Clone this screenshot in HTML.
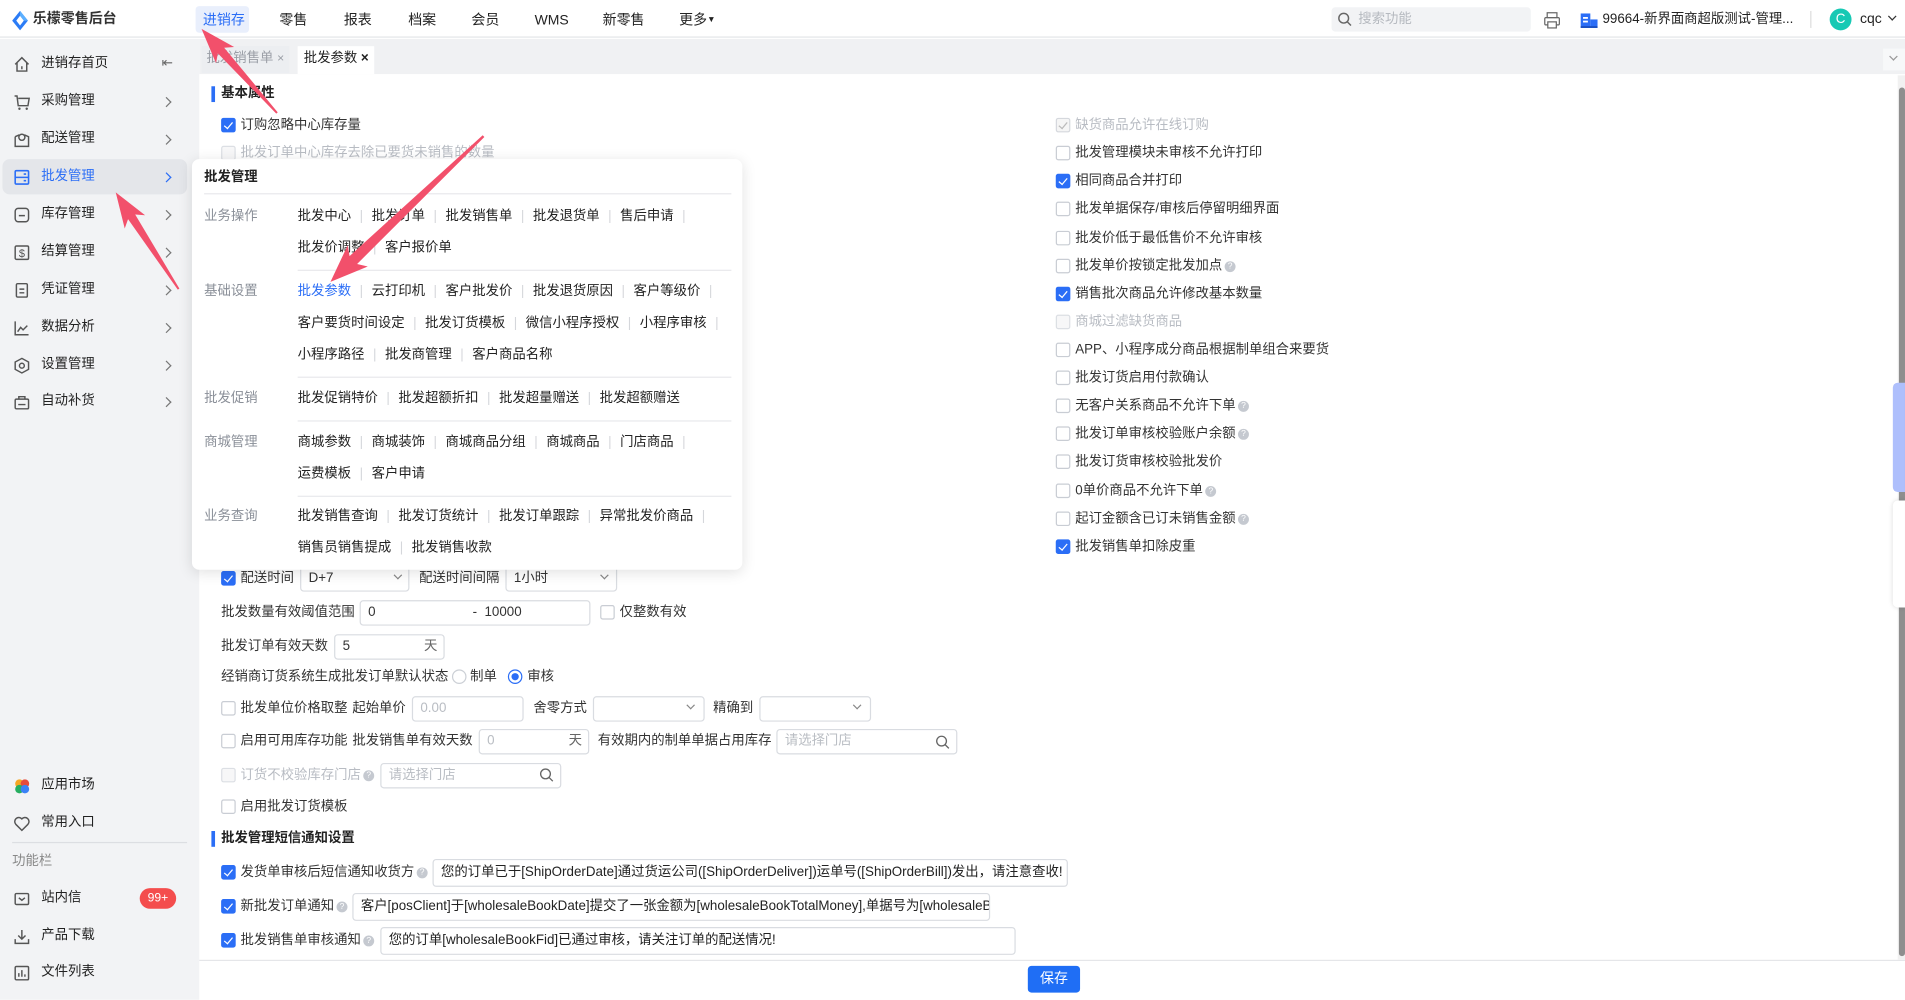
<!DOCTYPE html>
<html><head><meta charset="utf-8"><style>
*{margin:0;padding:0;box-sizing:border-box}
html,body{width:1905px;height:1000px;overflow:hidden;background:#fff}
body{font-family:"Liberation Sans","Noto Sans CJK SC",sans-serif;color:#333}
#w{position:absolute;left:0;top:0;width:1568px;height:823px;transform:scale(1.21492);transform-origin:0 0;font-size:11px;overflow:hidden;background:#fff}
.a{position:absolute;white-space:nowrap;line-height:19px}
.cb{position:absolute;width:12px;height:12px;border:1px solid #c9cdd4;border-radius:2px;background:#fff}
.cb.on{background:#2b6ef6;border-color:#2b6ef6}
.cb.on:after{content:"";position:absolute;left:3px;top:1px;width:3px;height:6px;border:solid #fff;border-width:0 1.3px 1.3px 0;transform:rotate(40deg)}
.cb.dis{background:#f7f7f8;border-color:#dcdfe4}
.cb.dis.on{background:#f5f5f5;border-color:#d5d8dd}
.cb.dis.on:after{border-color:#bbb}
.gray{color:#b8bcc3}
.q{display:inline-block;width:9px;height:9px;border-radius:50%;background:#c5c9d0;color:#fff;font-size:7px;line-height:9px;text-align:center;vertical-align:1px;margin-left:2px}
.in{position:absolute;height:21px;border:1px solid #d9dce1;border-radius:3px;background:#fff;line-height:19px;padding-left:6px;white-space:nowrap;overflow:hidden}
.nav{position:absolute;top:8px;font-size:11.5px;line-height:18px;color:#222}
.sb{position:absolute;left:34px;font-size:11px;color:#222;line-height:19px}
.ic{position:absolute;left:11px;width:14px;height:14px}
.chev{position:absolute;left:134px;width:6px;height:6px;border:solid #777;border-width:1.2px 1.2px 0 0;transform:rotate(45deg)}
.mi{position:absolute;line-height:19px;white-space:nowrap;color:#222}
.sep{color:#d5d7db;margin:0 7px}
.ml{position:absolute;left:168px;color:#8a8f98;line-height:19px}
.hl{position:absolute;height:1px;background:#e8e9ec}
</style></head><body><div id="w">

<!-- top bar -->
<div class="a" style="left:0;top:0;width:1568px;height:31px;background:#fff;border-bottom:1px solid #e3e5e8"></div>
<svg class="a" style="left:10px;top:9px" width="13" height="16" viewBox="0 0 13 16"><path d="M6.5 0L13 8L6.5 16L0 8Z" fill="#2b7cf6"/><path d="M6.5 4L9.6 8L6.5 12L3.4 8Z" fill="#fff"/><path d="M6.5 0L13 8L9.6 8L6.5 4Z" fill="#5cb0ff"/></svg>
<div class="a" style="left:27px;top:7px;font-size:11.5px;font-weight:bold;color:#333">乐檬零售后台</div>
<div class="a" style="left:161px;top:5px;width:44px;height:22px;background:#e9effc;border-radius:3px"></div>
<div class="nav" style="left:167px;color:#2b6ef6">进销存</div>
<div class="nav" style="left:230px">零售</div>
<div class="nav" style="left:283px">报表</div>
<div class="nav" style="left:336px">档案</div>
<div class="nav" style="left:388px">会员</div>
<div class="nav" style="left:440px">WMS</div>
<div class="nav" style="left:496px">新零售</div>
<div class="nav" style="left:559px">更多<span style="font-size:7px;vertical-align:2px">▼</span></div>
<div class="a" style="left:1096px;top:6px;width:164px;height:20px;background:#f2f3f5;border-radius:3px"></div>
<svg class="a" style="left:1101px;top:10px" width="12" height="12"><circle cx="5" cy="5" r="4" fill="none" stroke="#666" stroke-width="1.2"/><path d="M8 8L11 11" stroke="#666" stroke-width="1.2"/></svg>
<div class="a" style="left:1118px;top:7px;color:#b5b9bf">搜索功能</div>
<svg class="a" style="left:1270px;top:9px" width="15" height="15"><rect x="3.5" y="1.5" width="8" height="4" fill="none" stroke="#666"/><rect x="1.5" y="5.5" width="12" height="6" rx="1" fill="none" stroke="#666"/><rect x="4" y="9" width="7" height="5" fill="#fff" stroke="#666"/></svg>
<svg class="a" style="left:1301px;top:11px" width="14" height="12"><rect x="0" y="0" width="8" height="12" fill="#2b6ef6"/><rect x="8" y="5" width="6" height="7" fill="#2b6ef6"/><rect x="2" y="3" width="4" height="1.5" fill="#fff"/><rect x="2" y="6" width="4" height="1.5" fill="#fff"/><rect x="0" y="10.5" width="14" height="1.5" fill="#1a4fc0"/></svg>
<div class="a" style="left:1319px;top:7px;color:#222">99664-新界面商超版测试-管理...</div>
<div class="a" style="left:1490px;top:9px;width:1px;height:14px;background:#ddd"></div>
<div class="a" style="left:1506px;top:7px;width:18px;height:18px;border-radius:50%;background:#17c9b4;color:#fff;text-align:center;font-size:11px;line-height:18px">C</div>
<div class="a" style="left:1531px;top:7px;color:#222;font-size:11.5px">cqc</div>
<div class="a" style="left:1555px;top:11px;width:5px;height:5px;border:solid #333;border-width:0 1.3px 1.3px 0;transform:rotate(45deg)"></div>

<!-- sidebar -->
<div class="a" style="left:0;top:32px;width:164px;height:791px;background:#f2f3f5"></div>
<div class="a" style="left:2px;top:131px;width:152px;height:29px;background:#e4e6ea;border-radius:6px"></div>
<svg class="ic" style="top:46px" viewBox="0 0 14 14"><path d="M1.5 7L7 1.5L12.5 7M3 5.5V12.5H11V5.5M7 8.5V11" fill="none" stroke="#555" stroke-width="1.2"/></svg>
<div class="sb" style="top:43px">进销存首页</div>
<div class="a" style="left:133px;top:43px;color:#666">⇤</div>
<svg class="ic" style="top:77px" viewBox="0 0 14 14"><path d="M1 2H3L4 10H12L13 4H4" fill="none" stroke="#555" stroke-width="1.2"/><circle cx="5" cy="12.5" r="1" fill="#555"/><circle cx="11" cy="12.5" r="1" fill="#555"/></svg>
<div class="sb" style="top:74px">采购管理</div><div class="chev" style="top:81px"></div>
<svg class="ic" style="top:108px" viewBox="0 0 14 14"><path d="M1.5 4.5V12.5H12.5V4.5L9 3M5 3L1.5 4.5" fill="none" stroke="#555" stroke-width="1.2"/><circle cx="7" cy="5" r="2.5" fill="none" stroke="#555" stroke-width="1.2"/></svg>
<div class="sb" style="top:105px">配送管理</div><div class="chev" style="top:112px"></div>
<svg class="ic" style="top:139px" viewBox="0 0 14 14"><rect x="1.5" y="1.5" width="11" height="11" rx="1" fill="none" stroke="#2b6ef6" stroke-width="1.3"/><path d="M1.5 7H12.5M8.5 4.3H10.5M8.5 9.7H10.5" stroke="#2b6ef6" stroke-width="1.3"/></svg>
<div class="sb" style="top:136px;color:#2b6ef6">批发管理</div><div class="chev" style="top:143px;border-color:#2b6ef6"></div>
<svg class="ic" style="top:170px" viewBox="0 0 14 14"><rect x="1.5" y="1.5" width="11" height="11" rx="2.5" fill="none" stroke="#555" stroke-width="1.2"/><path d="M4.5 7.5H9.5" stroke="#555" stroke-width="1.2"/></svg>
<div class="sb" style="top:167px">库存管理</div><div class="chev" style="top:174px"></div>
<svg class="ic" style="top:201px" viewBox="0 0 14 14"><rect x="1.5" y="1.5" width="11" height="11" rx="1" fill="none" stroke="#555" stroke-width="1.2"/><text x="7" y="10.5" font-size="9" text-anchor="middle" fill="#555">$</text></svg>
<div class="sb" style="top:198px">结算管理</div><div class="chev" style="top:205px"></div>
<svg class="ic" style="top:232px" viewBox="0 0 14 14"><rect x="2.5" y="1.5" width="9" height="11" rx="1" fill="none" stroke="#555" stroke-width="1.2"/><path d="M5 6H9M5 9H9" stroke="#555" stroke-width="1.2"/></svg>
<div class="sb" style="top:229px">凭证管理</div><div class="chev" style="top:236px"></div>
<svg class="ic" style="top:263px" viewBox="0 0 14 14"><path d="M1.5 1.5V12.5H12.5M3.5 10L6 6.5L8 8.5L11.5 5" fill="none" stroke="#555" stroke-width="1.2"/></svg>
<div class="sb" style="top:260px">数据分析</div><div class="chev" style="top:267px"></div>
<svg class="ic" style="top:294px" viewBox="0 0 14 14"><path d="M7 1L12.5 4V10L7 13L1.5 10V4Z" fill="none" stroke="#555" stroke-width="1.2"/><circle cx="7" cy="7" r="2" fill="none" stroke="#555" stroke-width="1.2"/></svg>
<div class="sb" style="top:291px">设置管理</div><div class="chev" style="top:298px"></div>
<svg class="ic" style="top:324px" viewBox="0 0 14 14"><rect x="1.5" y="4.5" width="11" height="8" rx="1" fill="none" stroke="#555" stroke-width="1.2"/><path d="M4.5 4.5V2.5H9.5V4.5M4 9H10" fill="none" stroke="#555" stroke-width="1.2"/></svg>
<div class="sb" style="top:321px">自动补货</div><div class="chev" style="top:328px"></div>

<svg class="ic" style="top:640px" viewBox="0 0 14 14"><circle cx="5" cy="5" r="3.5" fill="#f6a623"/><circle cx="9.5" cy="5" r="3.5" fill="#e74c3c"/><circle cx="5" cy="9.5" r="3.5" fill="#27ae60"/><circle cx="9.5" cy="9.5" r="3.5" fill="#3b82f6"/></svg>
<div class="sb" style="top:637px">应用市场</div>
<svg class="ic" style="top:671px" viewBox="0 0 14 14"><path d="M7 12.5L2 7.5A3 3 0 0 1 7 3A3 3 0 0 1 12 7.5Z" fill="none" stroke="#555" stroke-width="1.2"/></svg>
<div class="sb" style="top:668px">常用入口</div>
<div class="a" style="left:10px;top:693px;width:144px;height:1px;background:#dcdee2"></div>
<div class="a" style="left:10px;top:700px;color:#888">功能栏</div>
<svg class="ic" style="top:733px" viewBox="0 0 14 14"><rect x="1.5" y="2.5" width="11" height="9" rx="1" fill="none" stroke="#555" stroke-width="1.2"/><path d="M4.5 6L7 8L9.5 6" fill="none" stroke="#555" stroke-width="1.2"/></svg>
<div class="sb" style="top:730px">站内信</div>
<div class="a" style="left:115px;top:731px;width:30px;height:17px;border-radius:9px;background:#f44d4d;color:#fff;font-size:10px;text-align:center;line-height:17px">99+</div>
<svg class="ic" style="top:764px" viewBox="0 0 14 14"><path d="M7 1.5V9M4 6L7 9L10 6M1.5 9V12.5H12.5V9" fill="none" stroke="#555" stroke-width="1.2"/></svg>
<div class="sb" style="top:761px">产品下载</div>
<svg class="ic" style="top:794px" viewBox="0 0 14 14"><rect x="1.5" y="1.5" width="11" height="11" rx="1" fill="none" stroke="#555" stroke-width="1.2"/><path d="M4.5 10V7M7 10V4.5M9.5 10V8" stroke="#555" stroke-width="1.2"/></svg>
<div class="sb" style="top:791px">文件列表</div>

<!-- tabs bar -->
<div class="a" style="left:164px;top:32px;width:1404px;height:29px;background:#f0f1f3"></div>
<div class="a" style="left:166px;top:38px;width:72px;height:22px;background:#eceef1;color:#9a9ea6;padding:1px 0 0 4px">批发销售单 <span style="font-size:10px">×</span></div>
<div class="a" style="left:245px;top:38px;width:63px;height:23px;background:#fff;color:#222;padding:1px 0 0 5px">批发参数 <b style="font-size:11px">×</b></div>
<div class="a" style="left:1550px;top:40px;width:18px;height:18px;background:#f7f8f9"></div>
<div class="a" style="left:1556px;top:44px;width:5px;height:5px;border:solid #999;border-width:0 1px 1px 0;transform:rotate(45deg)"></div>

<!-- content -->
<div class="a" style="left:174px;top:71px;width:3px;height:13px;background:#2b6ef6"></div>
<div class="a" style="left:182px;top:68px;font-weight:bold;color:#222">基本属性</div>
<div class="cb on" style="left:182px;top:97px"></div><div class="a" style="left:198px;top:94px">订购忽略中心库存量</div>
<div class="cb dis" style="left:182px;top:120px"></div><div class="a gray" style="left:198px;top:117px">批发订单中心库存去除已要货未销售的数量</div>

<!-- right column -->
<div class="cb dis on" style="left:869px;top:97px"></div><div class="a gray" style="left:885px;top:94px">缺货商品允许在线订购</div>
<div class="cb" style="left:869px;top:120px"></div><div class="a" style="left:885px;top:117px">批发管理模块未审核不允许打印</div>
<div class="cb on" style="left:869px;top:143px"></div><div class="a" style="left:885px;top:140px">相同商品合并打印</div>
<div class="cb" style="left:869px;top:166px"></div><div class="a" style="left:885px;top:163px">批发单据保存/审核后停留明细界面</div>
<div class="cb" style="left:869px;top:190px"></div><div class="a" style="left:885px;top:187px">批发价低于最低售价不允许审核</div>
<div class="cb" style="left:869px;top:213px"></div><div class="a" style="left:885px;top:210px">批发单价按锁定批发加点<span class="q">?</span></div>
<div class="cb on" style="left:869px;top:236px"></div><div class="a" style="left:885px;top:233px">销售批次商品允许修改基本数量</div>
<div class="cb dis" style="left:869px;top:259px"></div><div class="a gray" style="left:885px;top:256px">商城过滤缺货商品</div>
<div class="cb" style="left:869px;top:282px"></div><div class="a" style="left:885px;top:279px">APP、小程序成分商品根据制单组合来要货</div>
<div class="cb" style="left:869px;top:305px"></div><div class="a" style="left:885px;top:302px">批发订货启用付款确认</div>
<div class="cb" style="left:869px;top:328px"></div><div class="a" style="left:885px;top:325px">无客户关系商品不允许下单<span class="q">?</span></div>
<div class="cb" style="left:869px;top:351px"></div><div class="a" style="left:885px;top:348px">批发订单审核校验账户余额<span class="q">?</span></div>
<div class="cb" style="left:869px;top:374px"></div><div class="a" style="left:885px;top:371px">批发订货审核校验批发价</div>
<div class="cb" style="left:869px;top:398px"></div><div class="a" style="left:885px;top:395px">0单价商品不允许下单<span class="q">?</span></div>
<div class="cb" style="left:869px;top:421px"></div><div class="a" style="left:885px;top:418px">起订金额含已订未销售金额<span class="q">?</span></div>
<div class="cb on" style="left:869px;top:444px"></div><div class="a" style="left:885px;top:441px">批发销售单扣除皮重</div>

<!-- form rows -->
<div class="cb on" style="left:182px;top:470px"></div><div class="a" style="left:198px;top:467px">配送时间</div>
<div class="in" style="left:247px;top:466px;width:90px">D+7</div><div class="a" style="left:325px;top:471px;width:5px;height:5px;border:solid #888;border-width:0 1px 1px 0;transform:rotate(45deg)"></div>
<div class="a" style="left:345px;top:467px">配送时间间隔</div>
<div class="in" style="left:416px;top:466px;width:92px">1小时</div><div class="a" style="left:495px;top:471px;width:5px;height:5px;border:solid #888;border-width:0 1px 1px 0;transform:rotate(45deg)"></div>

<div class="a" style="left:182px;top:495px">批发数量有效阈值范围</div>
<div class="in" style="left:296px;top:494px;width:190px;height:21px">0<span style="position:absolute;left:92px">-&nbsp;&nbsp;10000</span></div>
<div class="cb" style="left:494px;top:498px"></div><div class="a" style="left:510px;top:495px">仅整数有效</div>

<div class="a" style="left:182px;top:523px">批发订单有效天数</div>
<div class="in" style="left:275px;top:522px;width:91px">5<span style="position:absolute;left:73px;color:#666">天</span></div>

<div class="a" style="left:182px;top:548px">经销商订货系统生成批发订单默认状态</div>
<div class="a" style="left:372px;top:551px;width:12px;height:12px;border:1px solid #ccd0d6;border-radius:50%"></div><div class="a" style="left:387px;top:548px">制单</div>
<div class="a" style="left:418px;top:551px;width:12px;height:12px;border:1px solid #2b6ef6;border-radius:50%"></div><div class="a" style="left:421px;top:554px;width:6px;height:6px;background:#2b6ef6;border-radius:50%"></div><div class="a" style="left:434px;top:548px">审核</div>

<div class="cb" style="left:182px;top:577px"></div><div class="a" style="left:198px;top:574px">批发单位价格取整</div>
<div class="a" style="left:290px;top:574px">起始单价</div>
<div class="in" style="left:339px;top:573px;width:92px;color:#b9bdc3">0.00</div>
<div class="a" style="left:439px;top:574px">舍零方式</div>
<div class="in" style="left:488px;top:573px;width:92px"></div><div class="a" style="left:566px;top:578px;width:5px;height:5px;border:solid #888;border-width:0 1px 1px 0;transform:rotate(45deg)"></div>
<div class="a" style="left:587px;top:574px">精确到</div>
<div class="in" style="left:625px;top:573px;width:92px"></div><div class="a" style="left:703px;top:578px;width:5px;height:5px;border:solid #888;border-width:0 1px 1px 0;transform:rotate(45deg)"></div>

<div class="cb" style="left:182px;top:604px"></div><div class="a" style="left:198px;top:601px">启用可用库存功能</div>
<div class="a" style="left:290px;top:601px">批发销售单有效天数</div>
<div class="in" style="left:394px;top:600px;width:91px;color:#b9bdc3">0<span style="position:absolute;left:73px;color:#666">天</span></div>
<div class="a" style="left:492px;top:601px">有效期内的制单单据占用库存</div>
<div class="in" style="left:639px;top:600px;width:149px;color:#b9bdc3">请选择门店</div>
<svg class="a" style="left:770px;top:605px" width="12" height="12"><circle cx="5" cy="5" r="4" fill="none" stroke="#666" stroke-width="1.1"/><path d="M8 8L11 11" stroke="#666" stroke-width="1.1"/></svg>

<div class="cb dis" style="left:182px;top:632px"></div><div class="a gray" style="left:198px;top:629px">订货不校验库存门店<span class="q">?</span></div>
<div class="in" style="left:313px;top:628px;width:149px;color:#b9bdc3">请选择门店</div>
<svg class="a" style="left:444px;top:632px" width="12" height="12"><circle cx="5" cy="5" r="4" fill="none" stroke="#666" stroke-width="1.1"/><path d="M8 8L11 11" stroke="#666" stroke-width="1.1"/></svg>

<div class="cb" style="left:182px;top:658px"></div><div class="a" style="left:198px;top:655px">启用批发订货模板</div>

<div class="a" style="left:174px;top:684px;width:3px;height:13px;background:#2b6ef6"></div>
<div class="a" style="left:182px;top:681px;font-weight:bold;color:#222">批发管理短信通知设置</div>

<div class="cb on" style="left:182px;top:712px"></div><div class="a" style="left:198px;top:709px">发货单审核后短信通知收货方<span class="q">?</span></div>
<div class="in" style="left:356px;top:707px;width:523px;height:23px;line-height:21px;color:#222">您的订单已于[ShipOrderDate]通过货运公司([ShipOrderDeliver])运单号([ShipOrderBill])发出，请注意查收!</div>
<div class="cb on" style="left:182px;top:740px"></div><div class="a" style="left:198px;top:737px">新批发订单通知<span class="q">?</span></div>
<div class="in" style="left:290px;top:735px;width:525px;height:23px;line-height:21px;color:#222">客户[posClient]于[wholesaleBookDate]提交了一张金额为[wholesaleBookTotalMoney],单据号为[wholesaleBookFid]的订单</div>
<div class="cb on" style="left:182px;top:768px"></div><div class="a" style="left:198px;top:765px">批发销售单审核通知<span class="q">?</span></div>
<div class="in" style="left:313px;top:763px;width:523px;height:23px;line-height:21px;color:#222">您的订单[wholesaleBookFid]已通过审核，请关注订单的配送情况!</div>

<!-- footer -->
<div class="a" style="left:164px;top:790px;width:1404px;height:1px;background:#e5e6e9"></div>
<div class="a" style="left:846px;top:795px;width:43px;height:22px;background:#1f6ef5;border-radius:3px;color:#fff;text-align:center;line-height:22px;font-size:11.5px">保存</div>

<!-- right scrollbar and floats -->
<div class="a" style="left:1562px;top:62px;width:6px;height:728px;background:#f1f1f1"></div>
<div class="a" style="left:1563px;top:72px;width:5px;height:715px;background:#8e8e8e;border-radius:3px"></div>
<div class="a" style="left:1558px;top:315px;width:10px;height:90px;background:#aebffc;border-radius:4px 0 0 4px"></div>
<div class="a" style="left:1558px;top:412px;width:10px;height:88px;background:#fff;border-radius:4px 0 0 4px;box-shadow:0 0 4px rgba(0,0,0,.15)"></div>

<!-- popup menu -->
<div class="a" style="left:158px;top:131px;width:453px;height:338px;background:#fff;border-radius:6px;box-shadow:0 2px 12px rgba(0,0,0,.12)"></div>
<div class="mi" style="left:168px;top:137px;font-weight:bold">批发管理</div>
<div class="hl" style="left:168px;top:159px;width:434px"></div>
<div class="ml" style="top:169px">业务操作</div>
<div class="mi" style="left:245px;top:169px">批发中心<span class="sep">|</span>批发订单<span class="sep">|</span>批发销售单<span class="sep">|</span>批发退货单<span class="sep">|</span>售后申请<span class="sep">|</span></div>
<div class="mi" style="left:245px;top:195px">批发价调整<span class="sep">|</span>客户报价单</div>
<div class="hl" style="left:245px;top:222px;width:357px"></div>
<div class="ml" style="top:231px">基础设置</div>
<div class="mi" style="left:245px;top:231px"><span style="color:#2b6ef6">批发参数</span><span class="sep">|</span>云打印机<span class="sep">|</span>客户批发价<span class="sep">|</span>批发退货原因<span class="sep">|</span>客户等级价<span class="sep">|</span></div>
<div class="mi" style="left:245px;top:257px">客户要货时间设定<span class="sep">|</span>批发订货模板<span class="sep">|</span>微信小程序授权<span class="sep">|</span>小程序审核<span class="sep">|</span></div>
<div class="mi" style="left:245px;top:283px">小程序路径<span class="sep">|</span>批发商管理<span class="sep">|</span>客户商品名称</div>
<div class="hl" style="left:245px;top:310px;width:357px"></div>
<div class="ml" style="top:319px">批发促销</div>
<div class="mi" style="left:245px;top:319px">批发促销特价<span class="sep">|</span>批发超额折扣<span class="sep">|</span>批发超量赠送<span class="sep">|</span>批发超额赠送</div>
<div class="hl" style="left:245px;top:346px;width:357px"></div>
<div class="ml" style="top:355px">商城管理</div>
<div class="mi" style="left:245px;top:355px">商城参数<span class="sep">|</span>商城装饰<span class="sep">|</span>商城商品分组<span class="sep">|</span>商城商品<span class="sep">|</span>门店商品<span class="sep">|</span></div>
<div class="mi" style="left:245px;top:381px">运费模板<span class="sep">|</span>客户申请</div>
<div class="hl" style="left:245px;top:408px;width:357px"></div>
<div class="ml" style="top:416px">业务查询</div>
<div class="mi" style="left:245px;top:416px">批发销售查询<span class="sep">|</span>批发订货统计<span class="sep">|</span>批发订单跟踪<span class="sep">|</span>异常批发价商品<span class="sep">|</span></div>
<div class="mi" style="left:245px;top:442px">销售员销售提成<span class="sep">|</span>批发销售收款</div>

<!-- arrows -->
<svg class="a" style="left:0;top:0" width="1568" height="823">
<g fill="#f2506b">
<polygon transform="translate(228,93) rotate(-131.9)" points="0,-0.8 69,-3.5 64,-10 93,0 64,10 69,3.5 0,0.8"/>
<polygon transform="translate(398,112) rotate(136.4)" points="0,-1 148,-4.5 143,-12 174,0 143,12 148,4.5 0,1"/>
<polygon transform="translate(147,238) rotate(-123)" points="0,-0.8 71,-3.5 66,-10 95,0 66,10 71,3.5 0,0.8"/>
</g></svg>

</div></body></html>
